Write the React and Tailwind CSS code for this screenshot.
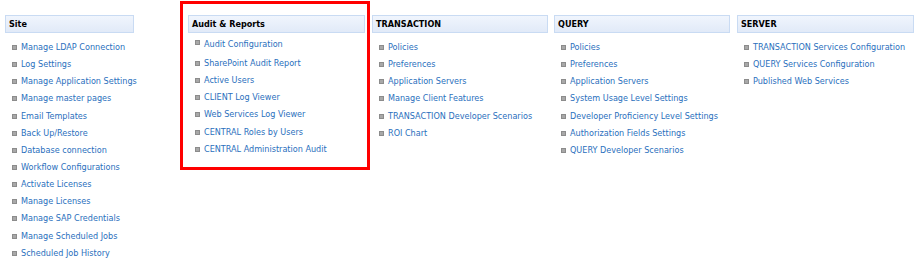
const site = [
  "Manage LDAP Connection",
  "Log Settings",
  "Manage Application Settings",
  "Manage master pages",
  "Email Templates",
  "Back Up/Restore",
  "Database connection",
  "Workflow Configurations",
  "Activate Licenses",
  "Manage Licenses",
  "Manage SAP Credentials",
  "Manage Scheduled Jobs",
  "Scheduled Job History",
];
const audit = [
  "Audit Configuration",
  "SharePoint Audit Report",
  "Active Users",
  "CLIENT Log Viewer",
  "Web Services Log Viewer",
  "CENTRAL Roles by Users",
  "CENTRAL Administration Audit",
];
const transaction = [
  "Policies",
  "Preferences",
  "Application Servers",
  "Manage Client Features",
  "TRANSACTION Developer Scenarios",
  "ROI Chart",
];
const query = [
  "Policies",
  "Preferences",
  "Application Servers",
  "System Usage Level Settings",
  "Developer Proficiency Level Settings",
  "Authorization Fields Settings",
  "QUERY Developer Scenarios",
];
const server = [
  "TRANSACTION Services Configuration",
  "QUERY Services Configuration",
  "Published Web Services",
];

function Header({ title }) {
  return (
    <div className="h-[18px] border border-[#c9dbf3] bg-gradient-to-b from-[#f0f5fd] to-[#e1eaf8] flex items-center pl-[3px] text-[9px] font-bold text-black leading-none">
      {title}
    </div>
  );
}

function Item({ label, first }) {
  return (
    <div className={`flex pl-[7px] ${first ? "h-[19px] items-start pt-[4px]" : "h-[17.15px] items-center"}`}>
      <span className="w-[5px] h-[5px] bg-[#a8a8a8] border border-[#8c8c8c] shrink-0" />
      <a className="ml-[4px] text-[9px] leading-none text-[#2a6fbd] whitespace-nowrap cursor-pointer">{label}</a>
    </div>
  );
}

function Column({ title, items, className = "" }) {
  return (
    <div className={className}>
      <Header title={title} />
      <div className="mt-[6px] flex flex-col">
        {items.map((t, i) => (
          <Item key={i} label={t} />
        ))}
      </div>
    </div>
  );
}

export default function App() {
  return (
    <div
      className="w-[918px] h-[276px] bg-white flex items-start pt-[1px] overflow-hidden"
      style={{ fontFamily: '"DejaVu Sans Condensed", "DejaVu Sans", sans-serif' }}
    >
      <Column title="Site" items={site} className="ml-[5px] w-[129px] mt-[14px]" />
      <div className="ml-[46px] w-[190px] h-[169px] border-[3px] border-[#ff0000] pl-[5px] pr-[2px] pt-[11px]">
        <Header title="Audit & Reports" />
        <div className="mt-[3px] flex flex-col">
          {audit.map((t, i) => (
            <Item key={i} label={t} first={i === 0} />
          ))}
        </div>
      </div>
      <Column title="TRANSACTION" items={transaction} className="ml-[2px] w-[176px] mt-[14px]" />
      <Column title="QUERY" items={query} className="ml-[6px] w-[176px] mt-[14px]" />
      <Column title="SERVER" items={server} className="ml-[7px] w-[177px] mt-[14px]" />
    </div>
  );
}
